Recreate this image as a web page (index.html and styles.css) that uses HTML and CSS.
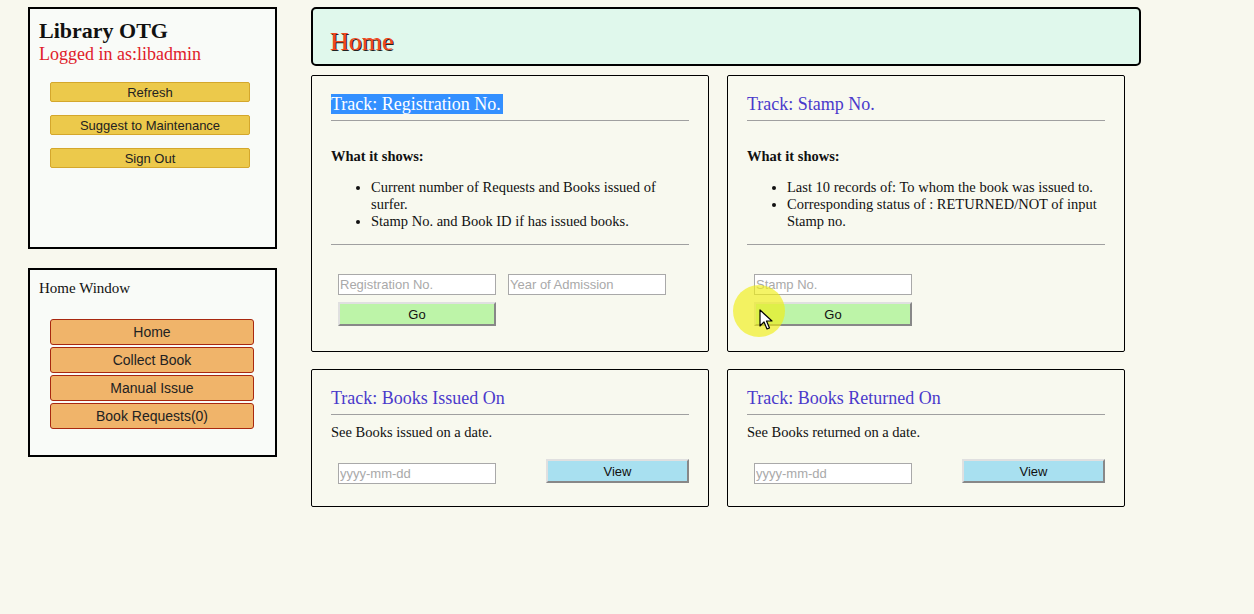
FILE: index.html
```html
<!DOCTYPE html>
<html>
<head>
<meta charset="utf-8">
<title>Library OTG</title>
<link rel="stylesheet" href="styles.css">
</head>
<body>
<div class="page">
  <aside class="sidebar">
    <section class="side-box user-box">
      <h2 class="app-title">Library OTG</h2>
      <div class="logged">Logged in as:libadmin</div>
      <div class="side-actions">
        <button class="btn-yellow">Refresh</button>
        <button class="btn-yellow">Suggest to Maintenance</button>
        <button class="btn-yellow">Sign Out</button>
      </div>
    </section>
    <section class="side-box nav-box">
      <div class="nav-title">Home Window</div>
      <div class="nav-actions">
        <button class="btn-orange">Home</button>
        <button class="btn-orange">Collect Book</button>
        <button class="btn-orange">Manual Issue</button>
        <button class="btn-orange">Book Requests(0)</button>
      </div>
    </section>
  </aside>
  <main class="main">
    <header class="header"><h1 class="page-title">Home</h1></header>
    <div class="cards">
      <section class="card card-tall">
        <h3 class="card-title"><span class="selected">Track: Registration No.</span></h3>
        <hr class="rule">
        <div class="shows">What it shows:</div>
        <ul class="points">
          <li>Current number of Requests and Books issued of surfer.</li>
          <li>Stamp No. and Book ID if has issued books.</li>
        </ul>
        <hr class="rule rule-low">
        <div class="form">
          <div class="inputs">
            <input class="field" placeholder="Registration No.">
            <input class="field" placeholder="Year of Admission">
          </div>
          <button class="btn-go">Go</button>
        </div>
      </section>
      <section class="card card-tall">
        <h3 class="card-title">Track: Stamp No.</h3>
        <hr class="rule">
        <div class="shows">What it shows:</div>
        <ul class="points">
          <li>Last 10 records of: To whom the book was issued to.</li>
          <li>Corresponding status of : RETURNED/NOT of input Stamp no.</li>
        </ul>
        <hr class="rule rule-low">
        <div class="form">
          <div class="inputs">
            <input class="field" placeholder="Stamp No.">
          </div>
          <button class="btn-go">Go</button>
        </div>
      </section>
      <section class="card card-short">
        <h3 class="card-title">Track: Books Issued On</h3>
        <hr class="rule">
        <p class="desc">See Books issued on a date.</p>
        <div class="date-row">
          <input class="field" placeholder="yyyy-mm-dd">
          <button class="btn-view">View</button>
        </div>
      </section>
      <section class="card card-short">
        <h3 class="card-title">Track: Books Returned On</h3>
        <hr class="rule">
        <p class="desc">See Books returned on a date.</p>
        <div class="date-row">
          <input class="field" placeholder="yyyy-mm-dd">
          <button class="btn-view">View</button>
        </div>
      </section>
    </div>
  </main>
</div>
<div class="cursor-halo"></div>
<svg class="cursor" width="14" height="22" viewBox="0 0 14 22"><path d="M1 1 L1 17 L5 13 L8 20 L10.5 19 L7.5 12 L13 12 Z" fill="#fff" stroke="#000" stroke-width="1.2" stroke-linejoin="round"/></svg>
</body>
</html>
```

FILE: styles.css
```css
* { box-sizing: border-box; }
html, body { margin: 0; padding: 0; }
body {
  background: #f8f8ee;
  font-family: "Liberation Serif", "Times New Roman", serif;
  color: #111;
  width: 1254px;
  height: 614px;
  overflow: hidden;
  position: relative;
}
.page {
  display: flex;
  align-items: flex-start;
  padding: 7px 0 0 28px;
  gap: 34px;
}
.sidebar {
  width: 249px;
  display: flex;
  flex-direction: column;
  gap: 19px;
}
.side-box {
  border: 2px solid #000;
  background: #f9fbf8;
  padding: 0 9px;
}
.user-box { height: 242px; padding-top: 9px; }
.app-title {
  margin: 0;
  font-size: 22px;
  line-height: 26px;
  font-weight: bold;
  color: #111;
}
.logged {
  font-size: 18px;
  line-height: 20px;
  color: #e0202a;
}
.side-actions {
  display: flex;
  flex-direction: column;
  gap: 13px;
  margin-top: 18px;
  padding-left: 11px;
}
.btn-yellow {
  width: 200px;
  height: 20px;
  background: #ecc94b;
  border: 1px solid #d4a72c;
  border-radius: 2px;
  font-family: "Liberation Sans", Arial, sans-serif;
  font-size: 13px;
  color: #222;
  padding: 0;
}
.nav-box { height: 189px; padding-top: 9px; }
.nav-title { font-size: 15px; line-height: 18px; }
.nav-actions {
  display: flex;
  flex-direction: column;
  gap: 2px;
  margin-top: 22px;
  padding-left: 11px;
}
.btn-orange {
  width: 204px;
  height: 26px;
  background: #f0b46a;
  border: 1px solid #a82810;
  border-radius: 3px;
  font-family: "Liberation Sans", Arial, sans-serif;
  font-size: 14px;
  color: #222;
  padding: 0;
}
.main { width: 830px; }
.header {
  height: 59px;
  border: 2px solid #000;
  border-radius: 5px;
  background: #e0f8ec;
  padding: 18px 0 0 17px;
}
.page-title {
  margin: 0;
  font-size: 26px;
  line-height: 30px;
  font-weight: normal;
  color: #f0481e;
  text-shadow: 1px 1px 0 #222;
}
.cards {
  margin-top: 9px;
  display: grid;
  grid-template-columns: 398px 398px;
  grid-template-rows: 277px 138px;
  column-gap: 18px;
  row-gap: 17px;
}
.card {
  border: 1px solid #000;
  border-radius: 2px;
  background: #f8f9ef;
  padding: 0 19px;
}
.card-tall { padding-top: 18px; }
.card-short { padding-top: 18px; }
.card-title {
  margin: 0;
  font-size: 18px;
  line-height: 21px;
  font-weight: normal;
  color: #4a3acb;
}
.selected { background: #3390ff; color: #fff; padding-right: 2px; }
.rule {
  margin: 5px 0 0;
  border: 0;
  border-top: 1px solid #a0a0a0;
  height: 1px;
}
.shows {
  margin-top: 27px;
  font-size: 14.5px;
  line-height: 17px;
  font-weight: bold;
}
.points {
  margin: 14px 0 0;
  padding-left: 40px;
  font-size: 14.5px;
  line-height: 17px;
}
.rule-low { margin-top: 14px; }
.form { margin-top: 29px; padding-left: 7px; }
.inputs { display: flex; gap: 12px; }
.field {
  width: 158px;
  height: 21px;
  border: 1px solid #a9a9a9;
  background: #fff;
  font-family: "Liberation Sans", Arial, sans-serif;
  font-size: 13px;
  padding: 0 1px;
  margin: 0;
}
.field::placeholder { color: #a9a9a9; }
.btn-go {
  margin-top: 7px;
  width: 158px;
  height: 24px;
  background: #bdf4a8;
  border: 2px solid;
  border-color: #e0e0e0 #888 #888 #e0e0e0;
  font-family: "Liberation Sans", Arial, sans-serif;
  font-size: 13px;
  color: #111;
  padding: 0;
}
.desc {
  margin: 9px 0 0;
  font-size: 14.5px;
  line-height: 17px;
}
.date-row {
  margin-top: 18px;
  display: flex;
  justify-content: space-between;
  align-items: flex-start;
  padding-left: 7px;
}
.date-row .field { margin-top: 4px; }
.btn-view {
  width: 143px;
  height: 24px;
  background: #a8e0f0;
  border: 2px solid;
  border-color: #e0e0e0 #888 #888 #e0e0e0;
  font-family: "Liberation Sans", Arial, sans-serif;
  font-size: 13px;
  color: #111;
  padding: 0;
}
.cursor-halo {
  position: absolute;
  left: 733px;
  top: 285px;
  width: 52px;
  height: 52px;
  border-radius: 50%;
  background: rgba(240, 238, 20, 0.65);
  pointer-events: none;
}
.cursor {
  position: absolute;
  left: 759px;
  top: 309px;
  pointer-events: none;
}
```
